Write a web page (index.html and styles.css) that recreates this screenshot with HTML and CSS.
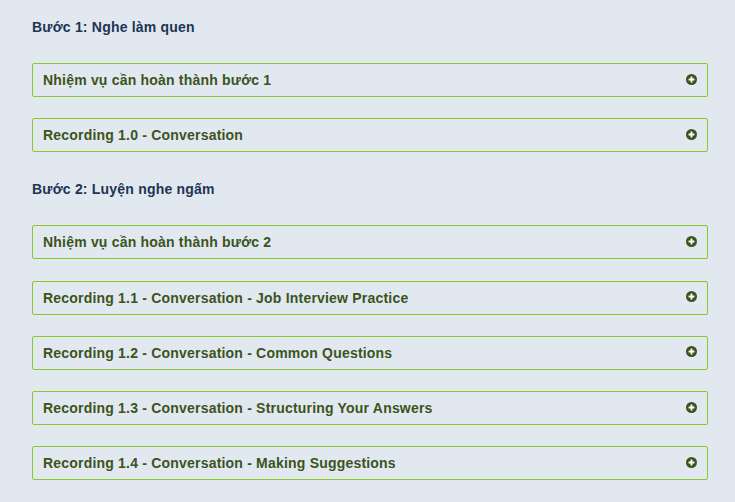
FILE: index.html
```html
<!DOCTYPE html>
<html>
<head>
    <title>Luyện nghe</title>
    <link rel="stylesheet" href="styles.css">
</head>
<body>
    <div class="steps">
        <h3 class="step-title">Bước 1: Nghe làm quen</h3>
        <div class="panel">
            <span>Nhiệm vụ cần hoàn thành bước 1</span>
            <svg class="plus" viewBox="0 0 12 12"><circle cx="6" cy="6" r="6"/><path d="M6 2.8v6.4M2.8 6h6.4"/></svg>
        </div>
        <div class="panel">
            <span>Recording 1.0 - Conversation</span>
            <svg class="plus" viewBox="0 0 12 12"><circle cx="6" cy="6" r="6"/><path d="M6 2.8v6.4M2.8 6h6.4"/></svg>
        </div>

        <h3 class="step-title">Bước 2: Luyện nghe ngấm</h3>
        <div class="panel">
            <span>Nhiệm vụ cần hoàn thành bước 2</span>
            <svg class="plus" viewBox="0 0 12 12"><circle cx="6" cy="6" r="6"/><path d="M6 2.8v6.4M2.8 6h6.4"/></svg>
        </div>
        <div class="panel">
            <span>Recording 1.1 - Conversation - Job Interview Practice</span>
            <svg class="plus" viewBox="0 0 12 12"><circle cx="6" cy="6" r="6"/><path d="M6 2.8v6.4M2.8 6h6.4"/></svg>
        </div>
        <div class="panel">
            <span>Recording 1.2 - Conversation - Common Questions</span>
            <svg class="plus" viewBox="0 0 12 12"><circle cx="6" cy="6" r="6"/><path d="M6 2.8v6.4M2.8 6h6.4"/></svg>
        </div>
        <div class="panel">
            <span>Recording 1.3 - Conversation - Structuring Your Answers</span>
            <svg class="plus" viewBox="0 0 12 12"><circle cx="6" cy="6" r="6"/><path d="M6 2.8v6.4M2.8 6h6.4"/></svg>
        </div>
        <div class="panel">
            <span>Recording 1.4 - Conversation - Making Suggestions</span>
            <svg class="plus" viewBox="0 0 12 12"><circle cx="6" cy="6" r="6"/><path d="M6 2.8v6.4M2.8 6h6.4"/></svg>
        </div>
    </div>
</body>
</html>
```

FILE: styles.css
```css
body {
    margin: 0;
    background: #e2e8f0;
    font-family: "Liberation Sans", Arial, sans-serif;
}
.steps {
    width: 676px;
    padding: 17px 0 0 32px;
}
.step-title {
    margin: 27px 0 26px;
    font-size: 14px;
    letter-spacing: 0.2px;
    line-height: 20px;
    font-weight: bold;
    color: #1c3553;
}
.step-title:first-child {
    margin-top: 0;
}
.panel {
    display: flex;
    align-items: center;
    justify-content: space-between;
    height: 32px;
    padding: 0 10px;
    margin-bottom: 21.3px;
    border: 1px solid #88c828;
    border-radius: 2px;
    font-size: 14px;
    letter-spacing: 0.2px;
    font-weight: bold;
    color: #3a541c;
}
.plus {
    width: 11px;
    height: 11px;
    margin-top: -2px;
}
.plus circle {
    fill: #3a541c;
}
.plus path {
    stroke: #fff;
    stroke-width: 2;
}
```
